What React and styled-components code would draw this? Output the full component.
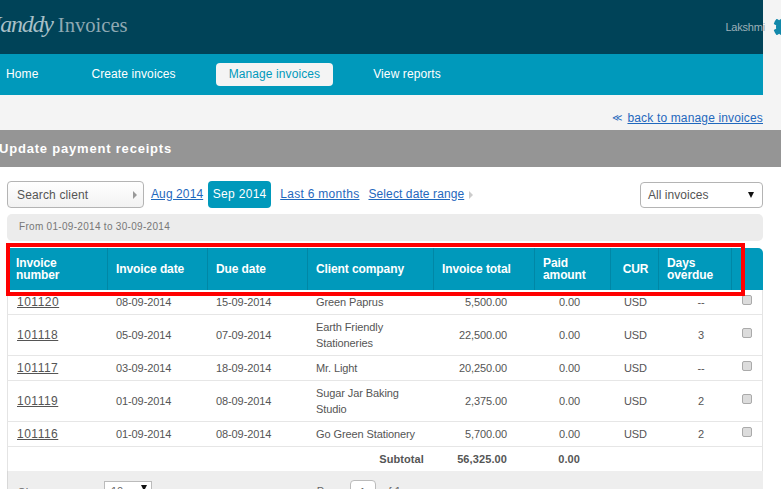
import React from "react";
import styled, { createGlobalStyle } from "styled-components";
import { FaCog } from "react-icons/fa";

const Global = createGlobalStyle`
  html, body { margin: 0; padding: 0; height: 489px; overflow: hidden; background: #f4f4f4; }
  body { font-family: "Liberation Sans", Arial, sans-serif; font-size: 12px; color: #555; }
`;
const Page = styled.div`width: 781px; height: 489px; overflow: hidden; display: flex; flex-direction: column;`;
const TopBar = styled.header`
  width: 763px; height: 54px; flex: none; background: #004358; display: flex; align-items: center; justify-content: space-between;
`;
const Logo = styled.div`display: flex; align-items: baseline; gap: 5px; margin-left: -16px; margin-top: -5px; white-space: nowrap;`;
const LogoScript = styled.span`font: italic 24px "Liberation Serif", serif; color: #a9c0c8; letter-spacing: -1.2px;`;
const LogoWord = styled.span`font: 20.6px "Liberation Serif", serif; color: #8fa9b3;`;
const User = styled.div`display: flex; align-items: center; gap: 8px; margin-right: -34px; margin-top: -1px;`;
const UserName = styled.span`font-size: 11px; letter-spacing: -0.2px; color: #9db0b8;`;
const Nav = styled.nav`
  width: 763px; height: 41px; flex: none; background: #0099bb; display: flex; align-items: center; gap: 27px; box-sizing: border-box; overflow: hidden;
`;
const NavItem = styled.a`
  flex: none; height: 23px; line-height: 23px; padding: 0 13px; border-radius: 4px; letter-spacing: 0.1px; font-size: 12px;
  color: ${p => (p.$active ? "#0099bb" : "#fff")}; background: ${p => (p.$active ? "#f4f4f4" : "transparent")};
  &:first-child { margin-left: -7px; }
`;
const BackStrip = styled.div`
  height: 35px; flex: none; box-sizing: border-box; width: 763px; display: flex; justify-content: flex-end; align-items: flex-end; gap: 5px; padding-bottom: 5px; color: #1f68bd;
`;
const BackArrow = styled.span`font-size: 10px; line-height: 15px;`;
const BackLink = styled.a`letter-spacing: 0.15px; text-decoration: underline; color: #1f68bd;`;
const TitleBar = styled.div`
  height: 37px; flex: none; background: #959595; color: #fff; font-weight: bold; font-size: 13px; letter-spacing: 0.8px; line-height: 37px; text-indent: -1px;
`;
const Content = styled.main`
  flex: 1; background: #fff; padding: 14px 18px 0 7px; display: flex; flex-direction: column;
`;
const Filters = styled.div`display: flex; align-items: center; height: 27px;`;
const SearchBox = styled.div`
  width: 137px; height: 27px; box-sizing: border-box; border: 1px solid #b4b4b4; border-radius: 4px; padding: 0 6px 0 9px; display: flex; align-items: center; justify-content: space-between;
  letter-spacing: 0.15px; color: #555; background: linear-gradient(#fff, #f2f2f2);
`;
const Arrow = styled.span`width: 0; height: 0; border-left: 4px solid ${p => p.$color || "#999"}; border-top: 4px solid transparent; border-bottom: 4px solid transparent;`;
const Links = styled.div`display: flex; align-items: center; margin-left: 7px; gap: 5px; flex: 1;`;
const FilterLink = styled.a`
  letter-spacing: ${p => p.$ls || 0.1}px; text-decoration: underline; color: #1f68bd; margin-right: ${p => p.$mr || 0}px; margin-top: -2px;
`;
const ActiveMonth = styled.span`
  width: 63px; height: 27px; line-height: 26px; text-align: center; background: #0099bb; color: #fff; border-radius: 4px; letter-spacing: 0.3px; margin-right: 4px;
`;
const SelectBox = styled.div`
  width: 123px; height: 26px; box-sizing: border-box; border: 1px solid #b4b4b4; border-radius: 4px; padding: 0 9px 0 7px; display: flex; align-items: center; justify-content: space-between; letter-spacing: 0.05px; color: #555;
`;
const Caret = styled.span`width: 0; height: 0; border-top: 6px solid #111; border-left: 3.5px solid transparent; border-right: 3.5px solid transparent; margin-right: -1px;`;
const DateBar = styled.div`
  margin-top: 6px; height: 27px; background: #ececec; border-radius: 5px; font-size: 10px; letter-spacing: 0.3px; line-height: 26px; padding-left: 12px; color: #777;
`;
const TableWrap = styled.div`position: relative; margin-top: 7px;`;
const Highlight = styled.div`
  position: absolute; left: -1px; top: -5px; width: 739px; height: 53px; box-sizing: border-box; border: 4px solid #f00; pointer-events: none;
`;
const Table = styled.table`
  width: 756px; table-layout: fixed; border-collapse: separate; border-spacing: 0;
`;
const Th = styled.th`
  height: 42px; box-sizing: border-box; padding: 0 6px 0 ${p => p.$pl || 8}px; background: #0099bb; color: #fff; font-size: 12px; line-height: 12px; font-weight: bold; letter-spacing: -0.1px; text-align: ${p => p.$align || "left"};
  border-right: 1px solid #0087a6;
  &:last-child { border-right: 0; border-top-right-radius: 5px; }
`;
const Td = styled.td`
  box-sizing: border-box; height: ${p => p.$h || 24}px; padding: 0 ${p => p.$pr || 6}px 0 ${p => p.$pl || 8}px; font-size: 11px; line-height: 16px; letter-spacing: ${p => (p.$bold ? 0.1 : -0.1)}px; color: #555;
  text-align: ${p => p.$align || "left"}; border-bottom: ${p => (p.$last ? 0 : "1px solid #e6e6e6")}; font-weight: ${p => (p.$bold ? "bold" : "normal")};
  &:first-child { border-left: 1px solid #e4e4e4; }
  &:last-child { border-right: 1px solid #e4e4e4; }
`;
const InvoiceLink = styled.a`font-size: 12px; letter-spacing: 0.5px; text-decoration: underline; color: #555;`;
const Check = styled.span`
  display: block; width: 10px; height: 10px; box-sizing: border-box; background: #dcdcdc; border: 1px solid #aaa; border-radius: 2px; margin: -4px 0 0 1px;
`;
const Pager = styled.div`
  width: 756px; height: 30px; background: #eee; display: flex; align-items: flex-start; padding: 10px 0 0 10px; box-sizing: border-box; border-left: 1px solid #d8d8d8; color: #666; font-size: 11px;
`;
const RowsLabel = styled.span`width: 86px; letter-spacing: 0.3px; margin-top: 5px;`;
const RowsSelect = styled.div`
  width: 48px; height: 22px; box-sizing: border-box; border: 1px solid #bbb; background: #fff; display: flex; justify-content: space-between; padding: 3px 5px 0 6px; margin-right: 141px;
`;
const PagerNav = styled.div`display: flex; align-items: flex-start; gap: 7px; color: #bbb; padding-top: 4px;`;
const PageInput = styled.span`
  width: 26px; height: 24px; box-sizing: border-box; border: 1px solid #bbb; border-radius: 4px; background: #fff; text-align: center; color: #666; margin-top: -5px; padding-top: 5px;
`;
const PageText = styled.span`color: #666;`;

const rows = [
  { id: "101120", d: "08-09-2014", due: "15-09-2014", c: ["Green Paprus"], t: "5,500.00", o: "--", h: 25 },
  { id: "101118", d: "05-09-2014", due: "07-09-2014", c: ["Earth Friendly", "Stationeries"], t: "22,500.00", o: "3", h: 41 },
  { id: "101117", d: "03-09-2014", due: "18-09-2014", c: ["Mr. Light"], t: "20,250.00", o: "--", h: 25 },
  { id: "101119", d: "01-09-2014", due: "08-09-2014", c: ["Sugar Jar Baking", "Studio"], t: "2,375.00", o: "2", h: 41 },
  { id: "101116", d: "01-09-2014", due: "08-09-2014", c: ["Go Green Stationery"], t: "5,700.00", o: "2", h: 25 },
];
const widths = [101, 100, 100, 126, 101, 76, 48, 73, 31];

export default function App() {
  return (
    <Page>
      <Global />
      <TopBar>
        <Logo><LogoScript>Handdy</LogoScript><LogoWord>Invoices</LogoWord></Logo>
        <User><UserName>Lakshmi</UserName><FaCog size={24} color="#1288aa" /></User>
      </TopBar>
      <Nav>
        <NavItem>Home</NavItem>
        <NavItem>Create invoices</NavItem>
        <NavItem $active>Manage invoices</NavItem>
        <NavItem>View reports</NavItem>
      </Nav>
      <BackStrip><BackArrow>≪</BackArrow><BackLink>back to manage invoices</BackLink></BackStrip>
      <TitleBar>Update payment receipts</TitleBar>
      <Content>
        <Filters>
          <SearchBox>Search client<Arrow /></SearchBox>
          <Links>
            <FilterLink>Aug 2014</FilterLink>
            <ActiveMonth>Sep 2014</ActiveMonth>
            <FilterLink $mr={4} $ls={0.3}>Last 6 months</FilterLink>
            <FilterLink>Select date range</FilterLink>
            <Arrow $color="#ccc" />
          </Links>
          <SelectBox>All invoices<Caret /></SelectBox>
        </Filters>
        <DateBar>From 01-09-2014 to 30-09-2014</DateBar>
        <TableWrap>
          <Table>
            <colgroup>{widths.map((w, i) => <col key={i} style={{ width: w }} />)}</colgroup>
            <thead>
              <tr>
                <Th $pl={9}>Invoice<br />number</Th>
                <Th>Invoice date</Th>
                <Th>Due date</Th>
                <Th>Client company</Th>
                <Th>Invoice total</Th>
                <Th>Paid<br />amount</Th>
                <Th $align="center">CUR</Th>
                <Th>Days<br />overdue</Th>
                <Th />
              </tr>
            </thead>
            <tbody>
              {rows.map(r => (
                <tr key={r.id}>
                  <Td $h={r.h} $pl={9}><InvoiceLink>{r.id}</InvoiceLink></Td>
                  <Td $h={r.h}>{r.d}</Td>
                  <Td $h={r.h}>{r.due}</Td>
                  <Td $h={r.h}>{r.c.map((l, i) => <React.Fragment key={l}>{i > 0 && <br />}{l}</React.Fragment>)}</Td>
                  <Td $h={r.h} $align="right" $pr={28}>{r.t}</Td>
                  <Td $h={r.h} $align="right" $pr={31}>0.00</Td>
                  <Td $h={r.h} $pl={13}>USD</Td>
                  <Td $h={r.h} $align="center" $pl={12} $pr={1}>{r.o}</Td>
                  <Td $h={r.h} $pl={9} $pr={1}><Check /></Td>
                </tr>
              ))}
              <tr>
                <Td colSpan={4} $align="right" $bold $last $pr={10}>Subtotal</Td>
                <Td $align="right" $pr={28} $bold $last>56,325.00</Td>
                <Td $align="right" $pr={31} $bold $last>0.00</Td>
                <Td colSpan={3} $last />
              </tr>
            </tbody>
          </Table>
          <Highlight />
          <Pager>
            <RowsLabel>Show rows:</RowsLabel>
            <RowsSelect>10<Caret /></RowsSelect>
            <PagerNav>
              <span>«</span><span>‹</span><PageText>Page</PageText><PageInput>1</PageInput><PageText>of 1</PageText><span>›</span><span>»</span>
            </PagerNav>
          </Pager>
        </TableWrap>
      </Content>
    </Page>
  );
}
